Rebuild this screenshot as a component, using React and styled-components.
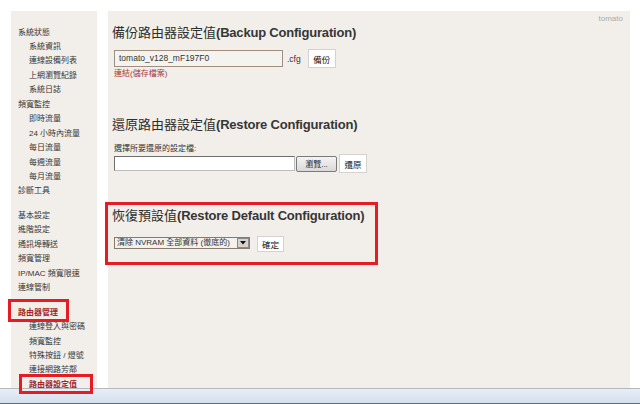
import React from "react";
import styled, { createGlobalStyle } from "styled-components";

const GlobalStyle = createGlobalStyle`
  html, body {
    margin: 0;
    padding: 0;
    background: #ffffff;
    overflow: hidden;
  }
  body {
    font-family: "Liberation Sans", "Noto Sans CJK TC", sans-serif;
  }
`;

const Page = styled.div`
  position: relative;
  width: 640px;
  height: 404px;
  display: flex;
  flex-direction: column;
  background: #ffffff;
`;

const Columns = styled.div`
  display: flex;
  gap: 11px;
  padding: 11px 10px 0 11px;
  height: 377px;
`;

const Sidebar = styled.nav`
  width: 86px;
  background: #f2efea;
  padding-top: 14.5px;
  box-sizing: border-box;
`;

const NavItem = styled.div`
  font-size: 8px;
  line-height: 14.45px;
  white-space: nowrap;
  padding-left: ${(p) => (p.$sub ? "18px" : "7px")};
  margin-top: ${(p) => p.$gap || 0}px;
  color: ${(p) => (p.$active ? "#a3262b" : "#363636")};
  font-weight: ${(p) => (p.$active ? "bold" : "normal")};
`;

const Main = styled.main`
  position: relative;
  flex: 1;
  background: #f2efea;
  padding: 14px 0 0 4px;
  box-sizing: border-box;
`;

const Brand = styled.div`
  position: absolute;
  top: 3px;
  right: 7px;
  font-size: 8px;
  line-height: 10px;
  color: #ababab;
`;

const Heading = styled.h2`
  margin: ${(p) => p.$top || 0}px 0 0 0;
  font-size: 13px;
  line-height: 16px;
  font-weight: bold;
  letter-spacing: -0.2px;
  color: #363636;
  white-space: nowrap;
`;

const Cjk = styled.span`
  font-weight: normal;
  letter-spacing: 0;
  color: #2e2e2e;
`;

const Body = styled.div`
  padding-left: 2px;
`;

const Row = styled.div`
  display: flex;
  align-items: ${(p) => p.$align || "center"};
  gap: ${(p) => p.$gap || 0}px;
  margin-top: ${(p) => p.$top || 0}px;
  height: ${(p) => p.$h}px;
`;

const TextInput = styled.div`
  width: 169px;
  height: 17px;
  box-sizing: border-box;
  border: 1px solid #a08f80;
  background: #f5f3ef;
  font-size: 8.5px;
  line-height: 15px;
  padding-left: 4px;
  color: #333;
`;

const Ext = styled.span`
  font-size: 8.5px;
  color: #333;
  margin-right: 3px;
`;

const Button = styled.div`
  width: ${(p) => p.$w}px;
  height: ${(p) => p.$h}px;
  box-sizing: border-box;
  border: 1px solid #d6d3ce;
  background: #ffffff;
  font-size: 8.5px;
  color: #111;
  display: flex;
  align-items: center;
  justify-content: center;
  margin-top: ${(p) => p.$top || 0}px;
`;

const Link = styled.div`
  font-size: 8px;
  line-height: 12px;
  color: #a33a3a;
`;

const Label = styled.div`
  font-size: 8px;
  line-height: 11px;
  margin-top: 10px;
  color: #333;
`;

const FileBox = styled.div`
  width: 181px;
  height: 15px;
  box-sizing: border-box;
  border: 1px solid #6e6e6e;
  border-right-color: #bdbdbd;
  border-bottom-color: #bdbdbd;
  background: #ffffff;
`;

const BrowseButton = styled.div`
  width: 41px;
  height: 16px;
  box-sizing: border-box;
  border: 1px solid #7a7a7a;
  border-radius: 2px;
  background: linear-gradient(#f4f4f4, #d9d9d9);
  font-size: 8px;
  color: #222;
  display: flex;
  align-items: center;
  justify-content: center;
  margin: 0 2px 0 1px;
`;

const Select = styled.div`
  display: flex;
  align-items: center;
  width: 136px;
  height: 12px;
  box-sizing: border-box;
  border: 1px solid #8c7a68;
  background: #f4f1ec;
  margin-top: 1px;
  margin-right: 7px;
`;

const SelectText = styled.span`
  flex: 1;
  font-size: 8px;
  line-height: 10px;
  padding-left: 2px;
  color: #333;
  white-space: nowrap;
  overflow: hidden;
`;

const SelectArrow = styled.span`
  width: 12px;
  height: 10px;
  box-sizing: border-box;
  border: 1px solid #8a8a8a;
  background: #d6d3cd;
  display: flex;
  align-items: center;
  justify-content: center;
`;

const StatusBar = styled.div`
  height: 16px;
  box-sizing: border-box;
  border-top: 1px solid #b8b8b8;
  border-bottom: 1px solid #5d6c80;
  background: linear-gradient(#e7eef7, #d4dfed);
`;

const Mark = styled.div`
  position: absolute;
  left: ${(p) => p.$x}px;
  top: ${(p) => p.$y}px;
  width: ${(p) => p.$w}px;
  height: ${(p) => p.$h}px;
  box-sizing: border-box;
  border: 3px solid #e61c24;
  pointer-events: none;
`;

const menu = [
  { t: "系統狀態" },
  { t: "系統資訊", sub: true },
  { t: "連線設備列表", sub: true },
  { t: "上網瀏覽紀錄", sub: true },
  { t: "系統日誌", sub: true },
  { t: "頻寬監控" },
  { t: "即時流量", sub: true },
  { t: "24 小時內流量", sub: true },
  { t: "每日流量", sub: true },
  { t: "每週流量", sub: true },
  { t: "每月流量", sub: true },
  { t: "診斷工具" },
  { t: "基本設定", gap: 10 },
  { t: "進階設定" },
  { t: "通訊埠轉送" },
  { t: "頻寬管理" },
  { t: "IP/MAC 頻寬限速" },
  { t: "連線管制" },
  { t: "路由器管理", gap: 10, active: true },
  { t: "連線登入與密碼", sub: true },
  { t: "頻寬監控", sub: true },
  { t: "特殊按鈕 / 燈號", sub: true },
  { t: "連接網路芳鄰", sub: true },
  { t: "路由器設定值", sub: true, active: true },
];

export default function App() {
  return (
    <Page>
      <GlobalStyle />
      <Columns>
        <Sidebar>
          {menu.map((m, i) => (
            <NavItem key={i} $sub={m.sub} $gap={m.gap} $active={m.active}>
              {m.t}
            </NavItem>
          ))}
        </Sidebar>
        <Main>
          <Brand>tomato</Brand>
          <Heading>
            <Cjk>備份路由器設定值</Cjk>(Backup Configuration)
          </Heading>
          <Body>
            <Row $top={8} $h={19} $gap={4}>
              <TextInput>tomato_v128_mF197F0</TextInput>
              <Ext>.cfg</Ext>
              <Button $w={28} $h={19}>備份</Button>
            </Row>
            <Link>連結(儲存檔案)</Link>
          </Body>

          <Heading $top={37}>
            <Cjk>還原路由器設定值</Cjk>(Restore Configuration)
          </Heading>
          <Body>
            <Label>選擇所要還原的設定檔:</Label>
            <Row $h={19}>
              <FileBox />
              <BrowseButton>瀏覽...</BrowseButton>
              <Button $w={28} $h={19}>還原</Button>
            </Row>
          </Body>

          <Heading $top={35}>
            <Cjk>恢復預設值</Cjk>(Restore Default Configuration)
          </Heading>
          <Body>
            <Row $top={12} $h={16} $align="flex-start">
              <Select>
                <SelectText>清除 NVRAM 全部資料 (徹底的)</SelectText>
                <SelectArrow>
                  <svg width="6" height="4" viewBox="0 0 6 4">
                    <path d="M0 0 H6 L3 3.5 Z" fill="#111" />
                  </svg>
                </SelectArrow>
              </Select>
              <Button $w={27} $h={16}>確定</Button>
            </Row>
          </Body>
        </Main>
      </Columns>
      <StatusBar />
      <Mark $x={8} $y={299} $w={61} $h={23} />
      <Mark $x={19} $y={374} $w={74} $h={20} />
      <Mark $x={105} $y={202} $w={273} $h={63} />
    </Page>
  );
}
